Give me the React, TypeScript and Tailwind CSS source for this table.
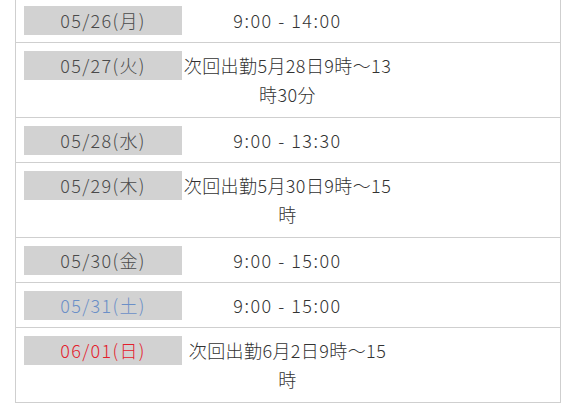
import React from 'react';

type Row = {
  date: string;
  tone?: 'sat' | 'sun';
  text: string;
  note?: boolean;
};

const rows: Row[] = [
  { date: '05/26(月)', text: '9:00 - 14:00' },
  { date: '05/27(火)', text: '次回出勤5月28日9時～13時30分', note: true },
  { date: '05/28(水)', text: '9:00 - 13:30' },
  { date: '05/29(木)', text: '次回出勤5月30日9時～15時', note: true },
  { date: '05/30(金)', text: '9:00 - 15:00' },
  { date: '05/31(土)', tone: 'sat', text: '9:00 - 15:00' },
  { date: '06/01(日)', tone: 'sun', text: '次回出勤6月2日9時～15時', note: true },
];

export default function App() {
  return (
    <div className="w-[576px] h-[406px] overflow-hidden bg-white font-['Noto_Sans_CJK_JP',sans-serif] font-light text-[18px]">
      <div className="ml-[15px] mt-[-2px] w-[546px] border-x border-[#cfcfcf]">
        {rows.map((row) => (
          <div
            key={row.date}
            className={`flex items-start border-b border-[#cfcfcf] pl-[8px] pt-[8px] ${row.note ? 'pb-[8px]' : 'pb-[7px]'}`}
          >
            <div
              className={`w-[158px] h-[29px] shrink-0 bg-[#d2d2d2] text-center leading-[29px] tracking-[1.3px] ${
                row.tone === 'sat'
                  ? 'text-[#6b8fc7]'
                  : row.tone === 'sun'
                  ? 'text-[#e3202c]'
                  : 'text-[#4a4a4a]'
              }`}
            >
              {row.date}
            </div>
            <div
              className={`w-[211px] text-center leading-[29px] text-[#333] ${
                row.note ? 'tracking-[0.4px]' : 'tracking-[1.5px]'
              }`}
            >
              {row.text}
            </div>
          </div>
        ))}
      </div>
    </div>
  );
}
